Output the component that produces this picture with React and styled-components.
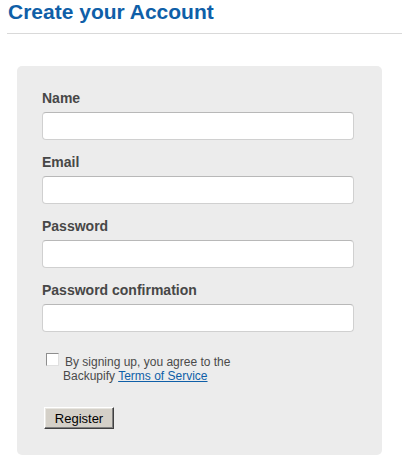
import React from "react";
import styled, { createGlobalStyle } from "styled-components";

const Global = createGlobalStyle`
  html, body { margin: 0; padding: 0; background: #ffffff; }
  body { font-family: "Liberation Sans", Arial, sans-serif; }
`;

const Page = styled.div`
  padding: 0 0 0 7px;
  width: 395px;
`;

const Title = styled.h1`
  margin: 0;
  padding: 0 0 0 1px;
  height: 33px;
  line-height: 24px;
  font-size: 21px;
  font-weight: bold;
  color: #0f5fa8;
  border-bottom: 1px solid #d9d9d9;
  box-sizing: content-box;
`;

const Panel = styled.form`
  margin: 32px 0 0 10px;
  width: 365px;
  box-sizing: border-box;
  padding: 24px 28px 26px 25px;
  background: #ececec;
  border-radius: 5px;
`;

const Field = styled.div`
  display: flex;
  flex-direction: column;
  margin-bottom: 14px;
`;

const Label = styled.label`
  font-size: 14px;
  font-weight: bold;
  line-height: 16px;
  color: #474747;
  margin-bottom: 6px;
`;

const Input = styled.input`
  box-sizing: border-box;
  width: 312px;
  height: 28px;
  margin: 0;
  background: #ffffff;
  border: 1px solid #d0d0d0;
  border-top-color: #b8b8b8;
  border-radius: 4px;
  outline: none;
`;

const AgreeRow = styled.div`
  display: flex;
  align-items: flex-start;
  margin: 21px 0 0 4px;
`;

const Check = styled.input`
  box-sizing: border-box;
  appearance: none;
  width: 13px;
  height: 13px;
  margin: 0 4px 0 0;
  background: #ffffff;
  border: 1px solid #8e8e8e;
  border-right-color: #e0e0e0;
  border-bottom-color: #e0e0e0;
  flex: none;
`;

const AgreeText = styled.div`
  font-size: 12px;
  line-height: 14px;
  color: #4a4a4a;
  margin-top: 2px;
  text-indent: 2px;
`;

const Link = styled.a`
  color: #0f5fa8;
  text-decoration: underline;
`;

const Button = styled.button`
  display: block;
  box-sizing: border-box;
  margin: 24px 0 0 2px;
  width: 70px;
  height: 22px;
  padding: 0;
  font-family: "Liberation Sans", Arial, sans-serif;
  font-size: 13px;
  color: #000000;
  background: #d4d0c8;
  border: 1px solid;
  border-color: #ffffff #404040 #404040 #ffffff;
  box-shadow: inset -1px -1px #808080, inset 1px 1px #e8e6e1;
`;

const fields = ["Name", "Email", "Password", "Password confirmation"];

export default function App() {
  return (
    <>
      <Global />
      <Page>
        <Title>Create your Account</Title>
        <Panel onSubmit={(e) => e.preventDefault()}>
          {fields.map((f) => (
            <Field key={f}>
              <Label>{f}</Label>
              <Input type={f.startsWith("Password") ? "password" : "text"} />
            </Field>
          ))}
          <AgreeRow>
            <Check type="checkbox" />
            <AgreeText>
              By signing up, you agree to the
              <br />
              Backupify <Link href="#">Terms of Service</Link>
            </AgreeText>
          </AgreeRow>
          <Button type="submit">Register</Button>
        </Panel>
      </Page>
    </>
  );
}
